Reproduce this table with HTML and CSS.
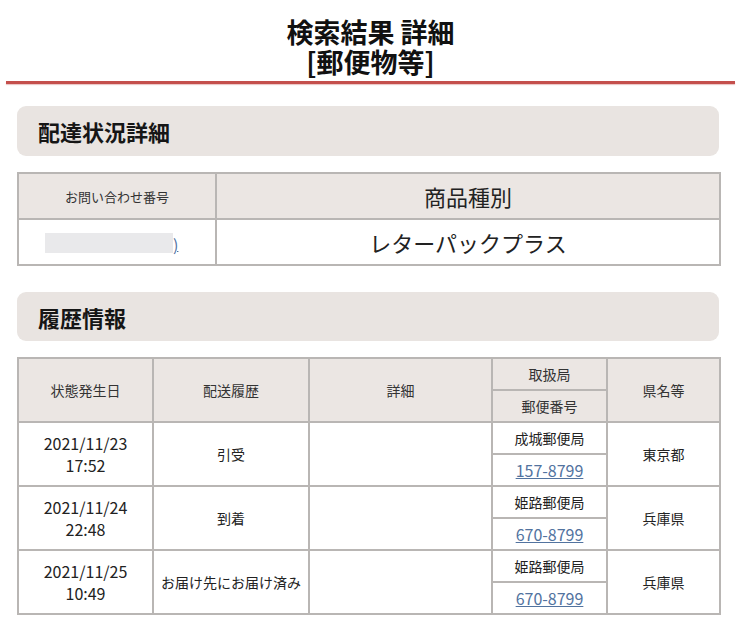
FILE: index.html
```html
<!DOCTYPE html>
<html lang="ja">
<head>
<meta charset="utf-8">
<title>検索結果 詳細</title>
<link rel="stylesheet" href="styles.css">
</head>
<body>
<header class="page-head">
  <h1 class="title"><span class="title-line">検索結果 詳細</span><span class="title-line">[郵便物等]</span></h1>
  <div class="rule"></div>
</header>

<section class="block">
  <h2 class="sec-title">配達状況詳細</h2>
  <table class="tbl tbl-status">
    <colgroup><col class="c-no"><col class="c-kind"></colgroup>
    <tr class="hrow">
      <th class="th-small">お問い合わせ番号</th>
      <th class="th-large">商品種別</th>
    </tr>
    <tr class="drow">
      <td class="td-no"><span class="redact"></span><a class="link link-tiny" href="#">)</a></td>
      <td class="td-large">レターパックプラス</td>
    </tr>
  </table>
</section>

<section class="block block-history">
  <h2 class="sec-title">履歴情報</h2>
  <table class="tbl tbl-history">
    <colgroup>
      <col class="c1"><col class="c2"><col class="c3"><col class="c4"><col class="c5">
    </colgroup>
    <tr class="hhalf">
      <th rowspan="2">状態発生日</th>
      <th rowspan="2">配送履歴</th>
      <th rowspan="2">詳細</th>
      <th>取扱局</th>
      <th rowspan="2">県名等</th>
    </tr>
    <tr class="hhalf"><th>郵便番号</th></tr>

    <tr class="half">
      <td rowspan="2" class="date">2021/11/23<br>17:52</td>
      <td rowspan="2">引受</td>
      <td rowspan="2"></td>
      <td>成城郵便局</td>
      <td rowspan="2">東京都</td>
    </tr>
    <tr class="half"><td><a class="link" href="#">157-8799</a></td></tr>

    <tr class="half">
      <td rowspan="2" class="date">2021/11/24<br>22:48</td>
      <td rowspan="2">到着</td>
      <td rowspan="2"></td>
      <td>姫路郵便局</td>
      <td rowspan="2">兵庫県</td>
    </tr>
    <tr class="half"><td><a class="link" href="#">670-8799</a></td></tr>

    <tr class="half">
      <td rowspan="2" class="date">2021/11/25<br>10:49</td>
      <td rowspan="2">お届け先にお届け済み</td>
      <td rowspan="2"></td>
      <td>姫路郵便局</td>
      <td rowspan="2">兵庫県</td>
    </tr>
    <tr class="half"><td><a class="link" href="#">670-8799</a></td></tr>
  </table>
</section>
</body>
</html>
```

FILE: styles.css
```css
* { box-sizing: border-box; }
html, body { margin: 0; padding: 0; background: #fff; }
body {
  width: 741px;
  font-family: "Noto Sans CJK JP", "Noto Sans", sans-serif;
  color: #1f1f1f;
}
.page-head { padding-top: 17px; }
.title {
  margin: 0;
  text-align: center;
  font-size: 27px;
  font-weight: 700;
  color: #111;
}
.title-line {
  display: block;
  line-height: 30px;
  height: 30px;
}
.rule {
  margin: 4px 6px 0 6px;
  height: 3px;
  background: #c44f4c;
  box-shadow: 0 1px 1px rgba(196, 79, 76, 0.35);
}
.block { margin: 22px 22px 0 17px; }
.block-history { margin-top: 26px; }
.sec-title {
  margin: 0;
  height: 50px;
  background: #e9e4e1;
  border-radius: 9px;
  padding-left: 21px;
  display: flex;
  align-items: center;
  font-size: 22px;
  font-weight: 700;
  color: #161616;
}
.block-history .sec-title { height: 49px; }
.tbl {
  width: 702px;
  border-collapse: collapse;
  table-layout: fixed;
  text-align: center;
}
.tbl th, .tbl td {
  border: 2px solid #b9b6b4;
  padding: 0;
  vertical-align: middle;
}
.tbl th { background: #ebe6e3; font-weight: 400; }

.tbl-status { margin-top: 16px; }
.c-no { width: 198px; }
.c-kind { width: 504px; }
.hrow, .drow { height: 46px; }
.th-small { font-size: 13px; color: #333; }
.th-large { font-size: 22px; color: #222; }
.td-large { font-size: 22px; color: #222; }
.td-no { text-align: left; padding-left: 26px !important; }
.redact {
  display: inline-block;
  width: 128px;
  height: 20px;
  background: #e9e9eb;
  vertical-align: middle;
}
.link-tiny { font-size: 12px; vertical-align: middle; }

.tbl-history { margin-top: 16px; font-size: 14px; }
.c1 { width: 135px; }
.c2 { width: 156px; }
.c3 { width: 183px; }
.c4 { width: 115px; }
.c5 { width: 113px; }
.hhalf, .half { height: 32px; }
.tbl-history th { font-size: 14px; color: #333; }
.tbl-history td { color: #222; }
.date { font-size: 16px; line-height: 22px; }
.link {
  color: #52739f;
  text-decoration: underline;
  font-size: 16px;
}
```
